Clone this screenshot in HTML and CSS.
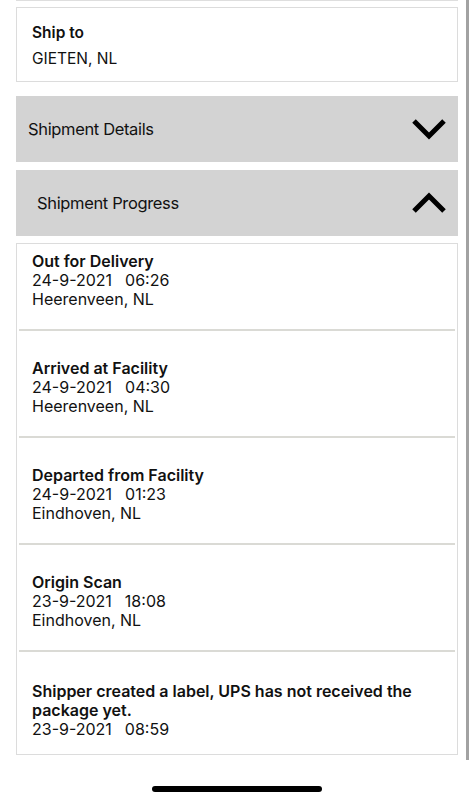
FILE: index.html
```html
<!DOCTYPE html>
<html lang="en">
<head>
  <meta charset="UTF-8" />
  <meta name="viewport" content="width=device-width, initial-scale=1.0"/>
  <title>Tracking</title>
  <link rel="stylesheet" href="styles.css">
</head>
<body>
  <div class="page">
    <div class="card-edge"></div>

    <!-- Ship to -->
    <div class="card ship-to">
      <div class="label">Ship to</div>
      <div class="value">GIETEN, NL</div>
    </div>

    <div class="section-bar details">
      <span>Shipment Details</span>
      <svg class="chevron" width="36" height="24" viewBox="0 0 36 24">
        <polyline points="3,4 18,19 33,4" />
      </svg>
    </div>

    <div class="section-bar progress">
      <span>Shipment Progress</span>
      <svg class="chevron" width="36" height="24" viewBox="0 0 36 24">
        <polyline points="3,20 18,5 33,20" />
      </svg>
    </div>

    <!-- Progress list -->
    <div class="card events">
      <div class="event">
        <div class="title">Out for Delivery</div>
        <div>24-9-2021<span class="time">06:26</span></div>
        <div>Heerenveen, NL</div>
      </div>
      <div class="event">
        <div class="title">Arrived at Facility</div>
        <div>24-9-2021<span class="time">04:30</span></div>
        <div>Heerenveen, NL</div>
      </div>
      <div class="event">
        <div class="title">Departed from Facility</div>
        <div>24-9-2021<span class="time">01:23</span></div>
        <div>Eindhoven, NL</div>
      </div>
      <div class="event">
        <div class="title">Origin Scan</div>
        <div>23-9-2021<span class="time">18:08</span></div>
        <div>Eindhoven, NL</div>
      </div>
      <div class="event">
        <div class="title">Shipper created a label, UPS has not received the package yet.</div>
        <div>23-9-2021<span class="time">08:59</span></div>
      </div>
    </div>

    <div class="home-bar"></div>
  </div>

  <div class="scroll-indicator"></div>
</body>
</html>
```

FILE: styles.css
```css
* {
  box-sizing: border-box;
  margin: 0;
  padding: 0;
}

body {
  background: #fff;
  color: #111;
  font-family: Inter, 'Liberation Sans', sans-serif;
  width: 474px;
  height: 800px;
  overflow: hidden;
}

.page {
  padding: 0 16px;
  display: flex;
  flex-direction: column;
}

.card-edge {
  height: 1px;
  background-color: #dedede;
}

.card {
  background: #fff;
  border: 1px solid #dcdcdc;
}

.ship-to {
  margin-top: 6px;
  padding: 15px 15px 12px;
  font-size: 15.5px;
  line-height: 20px;
}

.ship-to .label {
  font-weight: 600;
  margin-bottom: 6px;
}

.section-bar {
  background-color: lightgray;
  height: 66px;
  display: flex;
  align-items: center;
  justify-content: space-between;
  padding-right: 11px;
  font-size: 16.5px;
  letter-spacing: -0.35px;
}

.section-bar.details {
  margin-top: 14px;
  padding-left: 12px;
}

.section-bar.progress {
  margin-top: 8px;
  padding-left: 21px;
}

.chevron polyline {
  fill: none;
  stroke: #000;
  stroke-width: 5;
}

.events {
  margin-top: 7px;
  padding: 0 2px;
  font-size: 16px;
  line-height: 19px;
}

.event {
  padding: 28px 13px 20px;
  border-bottom: 2px solid #dadad5;
}

.event:first-child {
  padding-top: 8px;
}

.event:last-child {
  border-bottom: none;
  padding-top: 30px;
  padding-bottom: 15px;
}

.event .title {
  font-weight: 600;
}

.event .time {
  margin-left: 13px;
}

.home-bar {
  width: 170px;
  height: 6px;
  border-radius: 3px;
  background: #000;
  margin: 31px auto 0;
}

.scroll-indicator {
  position: absolute;
  top: 0;
  left: 466px;
  width: 3px;
  height: 760px;
  background: #a2a2a2;
}
```
